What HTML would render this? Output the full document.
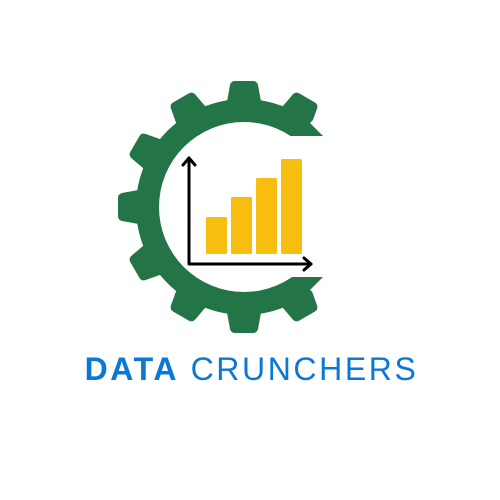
<!DOCTYPE html>
<html><head><style>
html,body{margin:0;padding:0;background:#fff;width:500px;height:500px;overflow:hidden}
.t{position:absolute;left:0;top:351px;width:500px;text-align:center;font-family:"Liberation Sans",sans-serif;font-size:32px;color:#0B78D4;letter-spacing:2.6px;white-space:nowrap;padding-left:3px;box-sizing:border-box}
.t b{font-weight:bold}
</style></head><body>
<svg width="500" height="500" style="position:absolute;left:0;top:0">
<defs>
<g id="tooth"><path d="M-18,-100 L-14,-122 Q-13,-126 -9,-126 L9,-126 Q13,-126 14,-122 L18,-100 Z" fill="#237447"/></g>
</defs>
<g transform="translate(244,207)">
<circle r="108" fill="#237447"/>
<use href="#tooth" transform="rotate(0)"/>
<use href="#tooth" transform="rotate(30)"/>
<use href="#tooth" transform="rotate(60)"/>
<use href="#tooth" transform="rotate(120)"/>
<use href="#tooth" transform="rotate(150)"/>
<use href="#tooth" transform="rotate(180)"/>
<use href="#tooth" transform="rotate(210)"/>
<use href="#tooth" transform="rotate(240)"/>
<use href="#tooth" transform="rotate(270)"/>
<use href="#tooth" transform="rotate(300)"/>
<use href="#tooth" transform="rotate(330)"/>
<circle r="85" fill="#fff"/>
</g>
<rect x="260" y="136" width="240" height="141" fill="#fff"/>
<rect x="323" y="0" width="177" height="500" fill="#fff"/>
<path d="M310,123 L323,136 L323,110 Z" fill="#fff"/>
<path d="M310,290 L323,277 L323,300 Z" fill="#fff"/>
<g fill="#F7BE10">
<rect x="206" y="217" width="21" height="37" rx="1.5"/>
<rect x="231" y="197" width="21" height="57" rx="1.5"/>
<rect x="256" y="178" width="21" height="76" rx="1.5"/>
<rect x="281" y="159" width="21" height="95" rx="1.5"/>
</g>
<g stroke="#000" stroke-width="3" fill="none" stroke-linecap="round" stroke-linejoin="round">
<path d="M189,158 L189,264 L311,264"/>
<path d="M183,165 L189,158 L195,165"/>
<path d="M304,258 L311,264 L304,270"/>
</g>
</svg>
<div class="t"><b>DATA</b> CRUNCHERS</div>
</body></html>
